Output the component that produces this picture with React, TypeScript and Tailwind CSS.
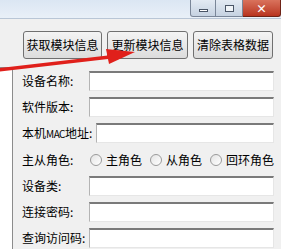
import React from "react";

const font = { fontFamily: '"Noto Sans CJK SC", "Noto Sans", sans-serif' };

function Field({ label, labelW = "w-[67px]" }: { label: React.ReactNode; labelW?: string }) {
  return (
    <div className="flex h-[20px] items-center">
      <span className={`${labelW} shrink-0 whitespace-nowrap text-[12px] leading-none text-black`}>{label}</span>
      <div className="h-[20px] flex-1 border-t-2 border-l border-r border-b border-t-[#7a7a7a] border-l-[#b4b4b4] border-r-[#e6e6e6] border-b-[#e6e6e6] bg-white" />
    </div>
  );
}

function Radio({ label }: { label: string }) {
  return (
    <div className="flex items-center gap-[4px] whitespace-nowrap">
      <span className="h-[12px] w-[12px] rounded-full border border-[#9a9a9a] bg-gradient-to-br from-[#e4e4e4] to-white" />
      <span className="text-[12px] leading-none text-black">{label}</span>
    </div>
  );
}

function Btn({ text, w }: { text: string; w: string }) {
  return (
    <button
      className={`${w} h-[28px] whitespace-nowrap rounded-[3px] border border-[#707070] bg-gradient-to-b from-[#f4f4f4] to-[#dcdcdc] text-[12px] leading-none text-black`}
    >
      {text}
    </button>
  );
}

export default function App() {
  return (
    <div className="relative h-[249px] w-[281px] overflow-hidden bg-[#f0f0f0]" style={font}>
      {/* title bar */}
      <div className="flex h-[19px] justify-end border-b border-b-[#b9c6d6] bg-gradient-to-b from-[#dbe6f3] to-[#e9f0f8]">
        <div className="flex h-[17px]">
          <div className="flex w-[26px] items-center justify-center rounded-bl-[3px] border border-t-0 border-[#7a8698] bg-gradient-to-b from-[#e3eaf3] to-[#c6d2e1]">
            <span className="mt-[5px] h-[3px] w-[9px] border border-[#4a5566] bg-white" />
          </div>
          <div className="flex w-[27px] items-center justify-center border-b border-r border-[#7a8698] bg-gradient-to-b from-[#e3eaf3] to-[#c6d2e1]">
            <span className="h-[7px] w-[9px] border border-[#4a5566] bg-[#f0f4f8]" />
          </div>
          <div className="flex w-[38px] items-center justify-center rounded-br-[3px] border-b border-r border-[#6e2317] bg-gradient-to-b from-[#d9725c] to-[#b8331f] text-[11px] font-bold leading-none text-white">
            ×
          </div>
        </div>
      </div>

      {/* button row */}
      <div className="mt-[12px] flex gap-[5px] pl-[23px]">
        <Btn text="获取模块信息" w="w-[79px]" />
        <Btn text="更新模块信息" w="w-[81px]" />
        <Btn text="清除表格数据" w="w-[80px]" />
      </div>

      {/* body */}
      <div className="mt-[8px] flex h-[200px]">
        <div className="w-[13px] shrink-0 border-t border-r border-[#8c8c8c] bg-white" />
        <div className="flex flex-1 flex-col gap-[6px] pl-[9px] pr-[9px] pt-[4px]">
          <Field label="设备名称:" />
          <Field label="软件版本:" />
          <Field
            label={
              <>
                本机<span className="text-[10px] tracking-[-0.5px]">MAC</span>地址:
              </>
            }
            labelW="w-[74px]"
          />
          <div className="flex h-[21px] items-center">
            <span className="w-[68px] shrink-0 whitespace-nowrap text-[12px] leading-none text-black">主从角色:</span>
            <div className="w-[60px]"><Radio label="主角色" /></div>
            <div className="w-[60px]"><Radio label="从角色" /></div>
            <Radio label="回环角色" />
          </div>
          <Field label="设备类:" />
          <Field label="连接密码:" />
          <Field label="查询访问码:" />
        </div>
      </div>

      {/* red annotation arrow */}
      <svg className="pointer-events-none absolute left-0 top-0" width="281" height="249" viewBox="0 0 281 249">
        <line x1="-2" y1="70" x2="110" y2="57" stroke="#e0201b" strokeWidth="3.5" />
        <polygon points="135,52 106,49 109,64" fill="#e0201b" />
      </svg>
    </div>
  );
}
